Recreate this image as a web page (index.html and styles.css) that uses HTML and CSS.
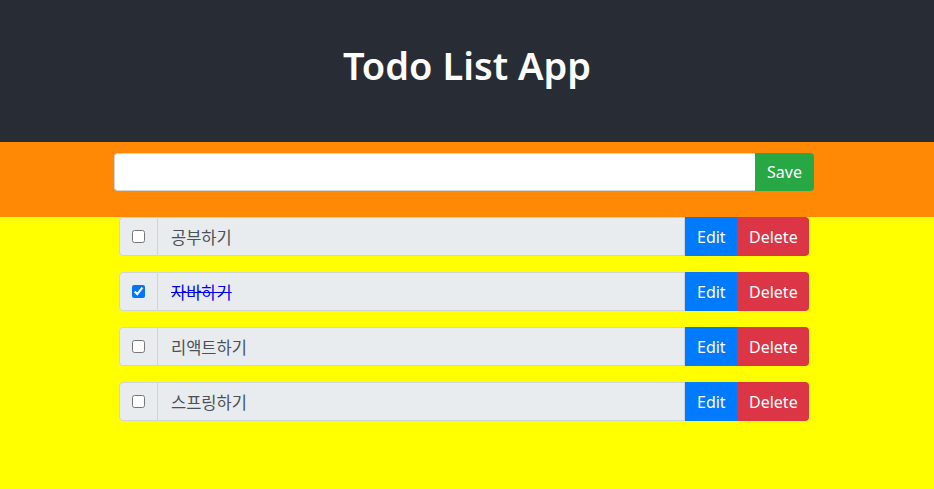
FILE: index.html
```html
<!DOCTYPE html>
<html lang="ko">
<head>
<meta charset="utf-8">
<title>Todo List App</title>
<link rel="stylesheet" href="styles.css">
</head>
<body>
<header class="app-header">
  <h1 class="app-title">Todo List App</h1>
</header>
<section class="entry-band">
  <div class="entry-group">
    <input class="entry-input" type="text">
    <button class="btn btn-save">Save</button>
  </div>
</section>
<main class="todo-area">
  <ul class="todo-list">
    <li class="todo-row">
      <span class="todo-check"><input type="checkbox"></span>
      <span class="todo-text">공부하기</span>
      <button class="btn btn-edit">Edit</button>
      <button class="btn btn-delete">Delete</button>
    </li>
    <li class="todo-row">
      <span class="todo-check"><input type="checkbox" checked></span>
      <span class="todo-text done">자바하기</span>
      <button class="btn btn-edit">Edit</button>
      <button class="btn btn-delete">Delete</button>
    </li>
    <li class="todo-row">
      <span class="todo-check"><input type="checkbox"></span>
      <span class="todo-text">리액트하기</span>
      <button class="btn btn-edit">Edit</button>
      <button class="btn btn-delete">Delete</button>
    </li>
    <li class="todo-row">
      <span class="todo-check"><input type="checkbox"></span>
      <span class="todo-text">스프링하기</span>
      <button class="btn btn-edit">Edit</button>
      <button class="btn btn-delete">Delete</button>
    </li>
  </ul>
</main>
</body>
</html>
```

FILE: styles.css
```css
* { box-sizing: border-box; }
html, body { margin: 0; padding: 0; height: 100%; }
body {
  font-family: "Segoe UI", "Noto Sans", "Noto Sans CJK KR", sans-serif;
  font-size: 16px;
  background: #ffff00;
  color: #212529;
}
.app-header {
  background: #282c34;
  height: 142px;
  display: flex;
  align-items: center;
  justify-content: center;
}
.app-title {
  margin: 0 0 10px;
  color: #fff;
  font-size: 38px;
  font-weight: 600;
  line-height: 1.2;
}
.entry-band {
  background: #ff8804;
  height: 75px;
  padding-top: 11px;
  padding-left: 114px;
}
.entry-group {
  display: flex;
  width: 700px;
  height: 38px;
}
.entry-input {
  flex: 1;
  border: 1px solid #ced4da;
  border-right: none;
  border-radius: 4px 0 0 4px;
  background: #fff;
  font: inherit;
  padding: 6px 12px;
}
.btn {
  border: none;
  font: inherit;
  color: #fff;
  padding: 0 12px;
  cursor: pointer;
}
.btn-save {
  background: #28a745;
  border-radius: 0 4px 4px 0;
  width: 59px;
}
.todo-area { padding-left: 119px; }
.todo-list {
  list-style: none;
  margin: 0;
  padding: 0;
  width: 690px;
  display: flex;
  flex-direction: column;
  gap: 16px;
}
.todo-row {
  display: flex;
  height: 39px;
}
.todo-check {
  width: 39px;
  background: #e9ecef;
  border: 1px solid #ced4da;
  border-radius: 4px 0 0 4px;
  display: flex;
  align-items: center;
  justify-content: center;
}
.todo-check input { margin: 0; width: 13px; height: 13px; }
.todo-text {
  flex: 1;
  background: #e9ecef;
  border: 1px solid #ced4da;
  border-left: none;
  display: flex;
  align-items: center;
  padding-left: 13px;
  color: #495057;
  font-size: 16.5px;
}
.todo-text.done {
  color: blue;
  text-decoration: line-through;
}
.btn-edit {
  background: #007bff;
  width: 52px;
}
.btn-delete {
  background: #dc3545;
  width: 72px;
  border-radius: 0 4px 4px 0;
}
```
